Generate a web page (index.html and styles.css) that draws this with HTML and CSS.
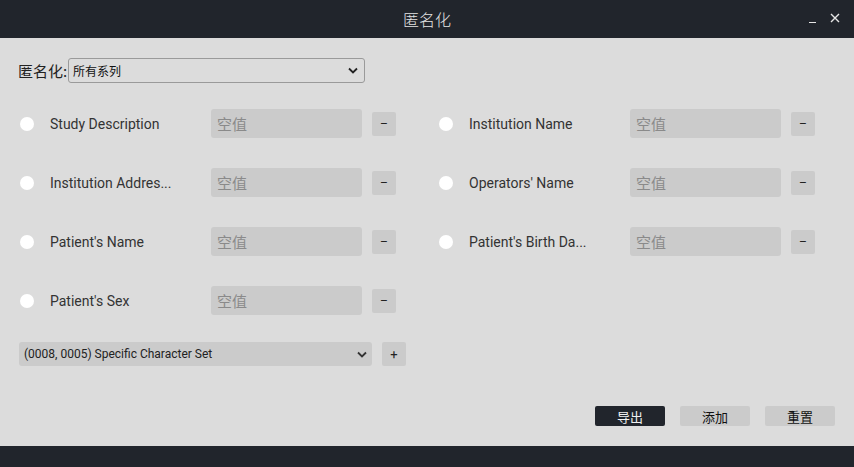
FILE: index.html
```html
<!DOCTYPE html>
<html>
<head>
<meta charset="utf-8">
<link rel="stylesheet" href="styles.css">
</head>
<body>
<div class="window">
  <div class="titlebar">
    <div class="title">匿名化</div>
    <div class="winbtns">
      <span class="wmin"></span>
      <svg class="wclose" width="10" height="10" viewBox="0 0 10 10"><path d="M1 1L9 9M9 1L1 9" stroke="#e6e6e6" stroke-width="1.4"/></svg>
    </div>
  </div>
  <div class="content">
    <div class="scope">
      <span class="scope-label">匿名化:</span>
      <div class="select">
        <span>所有系列</span>
        <svg width="10" height="7" viewBox="0 0 10 7"><path d="M1 1.5L5 5.5L9 1.5" fill="none" stroke="#222" stroke-width="1.8"/></svg>
      </div>
    </div>
    <div class="grid">
      <div class="row"><span class="radio"></span><span class="label">Study Description</span><div class="input">空值</div><div class="sbtn">–</div></div>
      <div class="row"><span class="radio"></span><span class="label">Institution Name</span><div class="input">空值</div><div class="sbtn">–</div></div>
      <div class="row"><span class="radio"></span><span class="label">Institution Addres...</span><div class="input">空值</div><div class="sbtn">–</div></div>
      <div class="row"><span class="radio"></span><span class="label">Operators' Name</span><div class="input">空值</div><div class="sbtn">–</div></div>
      <div class="row"><span class="radio"></span><span class="label">Patient's Name</span><div class="input">空值</div><div class="sbtn">–</div></div>
      <div class="row"><span class="radio"></span><span class="label">Patient's Birth Da...</span><div class="input">空值</div><div class="sbtn">–</div></div>
      <div class="row"><span class="radio"></span><span class="label">Patient's Sex</span><div class="input">空值</div><div class="sbtn">–</div></div>
    </div>
    <div class="addrow">
      <div class="tagselect">
        <span>(0008, 0005) Specific Character Set</span>
        <svg width="10" height="7" viewBox="0 0 10 7"><path d="M1 1.5L5 5.5L9 1.5" fill="none" stroke="#333" stroke-width="1.8"/></svg>
      </div>
      <div class="sbtn plus">+</div>
    </div>
    <div class="actions">
      <div class="btn dark">导出</div>
      <div class="btn">添加</div>
      <div class="btn">重置</div>
    </div>
  </div>
  <div class="footer"></div>
</div>
</body>
</html>
```
FILE: styles.css
```css
html, body {
  margin: 0;
  padding: 0;
  background: #dcdcdc;
  font-family: Roboto, "Noto Sans CJK SC", sans-serif;
}
.window {
  width: 854px;
  height: 467px;
  display: flex;
  flex-direction: column;
}
.titlebar {
  height: 38px;
  background: #21252c;
  position: relative;
  display: flex;
  align-items: center;
  justify-content: center;
}
.title {
  color: #e4e4e4;
  font-family: "Noto Sans CJK SC", sans-serif;
  font-size: 16px;
  font-weight: 300;
  line-height: 38px;
}
.winbtns {
  position: absolute;
  right: 14px;
  top: 12px;
  display: flex;
  align-items: flex-end;
  gap: 14px;
  height: 11px;
}
.wmin {
  display: block;
  width: 7px;
  height: 1px;
  background: #e6e6e6;
}
.wclose { display: block; }
.content {
  height: 408px;
  background: #dcdcdc;
  padding: 20px 0 0 18px;
  box-sizing: border-box;
}
.scope {
  display: flex;
  align-items: center;
  height: 25px;
}
.scope-label {
  font-family: "Noto Sans CJK SC", sans-serif;
  font-size: 15px;
  color: #222;
  width: 50px;
  white-space: nowrap;
}
.select {
  width: 297px;
  height: 25px;
  box-sizing: border-box;
  border: 1px solid #9a9a9a;
  border-radius: 3px;
  display: flex;
  align-items: center;
  justify-content: space-between;
  padding: 0 6px 0 4px;
  font-family: "Noto Sans CJK SC", sans-serif;
  font-size: 12px;
  color: #111;
}
.grid {
  display: grid;
  grid-template-columns: 419px 419px;
  row-gap: 30px;
  margin-top: 26px;
}
.row {
  display: flex;
  align-items: center;
  height: 29px;
  padding-left: 2px;
}
.radio {
  width: 14px;
  height: 14px;
  border-radius: 50%;
  background: #fff;
  margin-right: 16px;
  flex: none;
}
.label {
  width: 161px;
  font-size: 14px;
  color: #333;
  white-space: nowrap;
}
.input {
  width: 151px;
  height: 29px;
  box-sizing: border-box;
  background: #cbcbcb;
  border-radius: 3px;
  padding-left: 6px;
  font-family: "Noto Sans CJK SC", sans-serif;
  font-size: 15px;
  line-height: 29px;
  color: #8a8a8a;
  margin-right: 10px;
}
.sbtn {
  width: 24px;
  height: 24px;
  background: #cbcbcb;
  border-radius: 2px;
  display: flex;
  align-items: center;
  justify-content: center;
  font-size: 12px;
  color: #222;
}
.addrow {
  display: flex;
  align-items: center;
  margin-top: 27px;
  padding-left: 1px;
}
.tagselect {
  width: 353px;
  height: 24px;
  box-sizing: border-box;
  background: #cbcbcb;
  border-radius: 3px;
  display: flex;
  align-items: center;
  justify-content: space-between;
  padding: 0 5px 0 5px;
  font-size: 12px;
  color: #222;
  margin-right: 10px;
}
.plus { font-size: 13px; }
.actions {
  display: flex;
  justify-content: flex-end;
  gap: 15px;
  margin-top: 40px;
  padding-right: 19px;
}
.btn {
  width: 70px;
  height: 20px;
  background: #cbcbcb;
  border-radius: 2px;
  display: flex;
  align-items: center;
  justify-content: center;
  font-family: "Noto Sans CJK SC", sans-serif;
  font-size: 13px;
  color: #111;
}
.btn.dark {
  background: #21252c;
  color: #f0f0f0;
}
.footer {
  height: 21px;
  background: #21252c;
}
```
